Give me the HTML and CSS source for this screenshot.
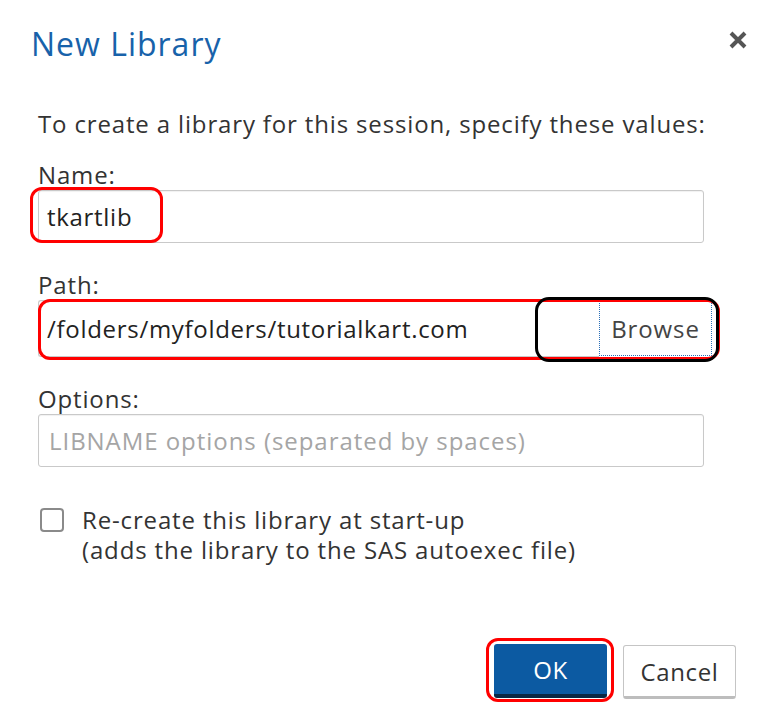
FILE: index.html
```html
<!DOCTYPE html>
<html>
<head>
<meta charset="utf-8">
<link rel="stylesheet" href="styles.css">
</head>
<body>
<div class="dialog">
  <div class="header">
    <h1 class="title">New Library</h1>
    <svg class="close" width="20" height="20" viewBox="0 0 20 20"><path d="M3 3 L17 17 M17 3 L3 17" stroke="#555" stroke-width="4" stroke-linecap="butt"/></svg>
  </div>
  <div class="content">
    <p class="intro">To create a library for this session, specify these values:</p>

    <div class="field first">
      <div class="label">Name:</div>
      <div class="input-wrap">
        <div class="input">tkartlib</div>
        <span class="mark mark-name"></span>
      </div>
    </div>

    <div class="field">
      <div class="label">Path:</div>
      <div class="path-row">
        <div class="input path-input">/folders/myfolders/tutorialkart.com</div>
        <div class="browse">Browse</div>
        <span class="mark mark-path"></span>
        <span class="mark mark-browse"></span>
      </div>
    </div>

    <div class="field">
      <div class="label">Options:</div>
      <div class="input placeholder">LIBNAME options (separated by spaces)</div>
    </div>

    <div class="check-row">
      <span class="checkbox"></span>
      <div class="check-text">Re-create this library at start-up<br>(adds the library to the SAS autoexec file)</div>
    </div>
  </div>
  <div class="footer">
    <div class="ok-wrap">
      <button class="btn btn-ok">OK</button>
      <span class="mark mark-ok"></span>
    </div>
    <button class="btn btn-cancel">Cancel</button>
  </div>
</div>
</body>
</html>
```

FILE: styles.css
```css
* { box-sizing: border-box; }
html, body { margin: 0; padding: 0; background: #fff; }
body {
  font-family: "Open Sans", Lato, sans-serif;
  color: #333;
  width: 768px;
  height: 716px;
  overflow: hidden;
}
.dialog { width: 768px; }
.header {
  height: 90px;
  display: flex;
  align-items: center;
  justify-content: space-between;
  padding: 0 20px 4px 31px;
}
.title {
  margin: 0;
  font-weight: 400;
  font-size: 32px;
  color: #1862aa;
  letter-spacing: 1px;
}
.close { margin-top: -6px; }
.content { padding: 0 64px 0 38px; }
.intro {
  margin: 19px -40px 0 0;
  font-size: 24px;
  line-height: 30px;
  letter-spacing: 0.85px;
  white-space: nowrap;
}
.field { margin-top: 29px; }
.field.first { margin-top: 23px; }
.label {
  font-size: 24px;
  line-height: 26px;
  margin-bottom: 2px;
  letter-spacing: 0.85px;
}
.input-wrap { position: relative; }
.input {
  height: 53px;
  border: 1px solid #c9c9c9;
  border-radius: 3px;
  box-shadow: inset 0 1px 1px rgba(0,0,0,0.06);
  padding: 0 8px;
  display: flex;
  align-items: center;
  font-size: 24px;
  color: #222;
  letter-spacing: 0.7px;
}
.placeholder { color: #a5a5a5; padding-left: 10px; letter-spacing: 0.95px; }
.path-row {
  position: relative;
  display: flex;
  margin-right: -8px;
  height: 57px;
}
.path-input {
  flex: 1;
  height: 57px;
  border-right: none;
  border-radius: 3px 0 0 3px;
}
.browse {
  width: 113px;
  height: 55px;
  margin-top: 1px;
  border: 1px dotted #2a6fb8;
  display: flex;
  align-items: center;
  justify-content: center;
  font-size: 24px;
  color: #444;
  letter-spacing: 0.9px;
  background: #fff;
}
.mark {
  position: absolute;
  border-radius: 12px;
  pointer-events: none;
}
.mark-name {
  left: -8px; top: -3px; width: 133px; height: 56px;
  border: 3px solid #f00;
}
.mark-path {
  left: 0; top: -1px; width: 682px; height: 61px;
  border: 3px solid #f00;
}
.mark-browse {
  left: 497px; top: -3px; width: 184px; height: 65px;
  border: 3px solid #000;
  border-radius: 14px;
}
.check-row {
  display: flex;
  align-items: flex-start;
  margin-top: 38px;
}
.checkbox {
  width: 24px;
  height: 24px;
  border: 2px solid #8a8a8a;
  border-radius: 4px;
  margin: 3px 18px 0 2px;
  flex: none;
}
.check-text {
  font-size: 24px;
  line-height: 30px;
  letter-spacing: 0.85px;
}
.footer {
  display: flex;
  justify-content: flex-end;
  gap: 16px;
  padding-right: 32px;
  margin-top: 79px;
}
.ok-wrap { position: relative; }
.btn {
  width: 113px;
  height: 54px;
  border-radius: 3px;
  font-family: "Open Sans", Lato, sans-serif;
  font-size: 24px;
  letter-spacing: 0.6px;
  padding: 0;
  cursor: pointer;
}
.btn-ok {
  background: #0c5aa2;
  color: #fff;
  border: none;
  border-bottom: 4px solid #0a2744;
  display: block;
}
.btn-cancel {
  background: #fff;
  color: #333;
  border: 1px solid #c5c5c5;
  border-bottom: 3px solid #bdbdbd;
  margin-top: 1px;
}
.mark-ok {
  left: -8px; top: -6px; width: 128px; height: 64px;
  border: 3px solid #f00;
}
```
